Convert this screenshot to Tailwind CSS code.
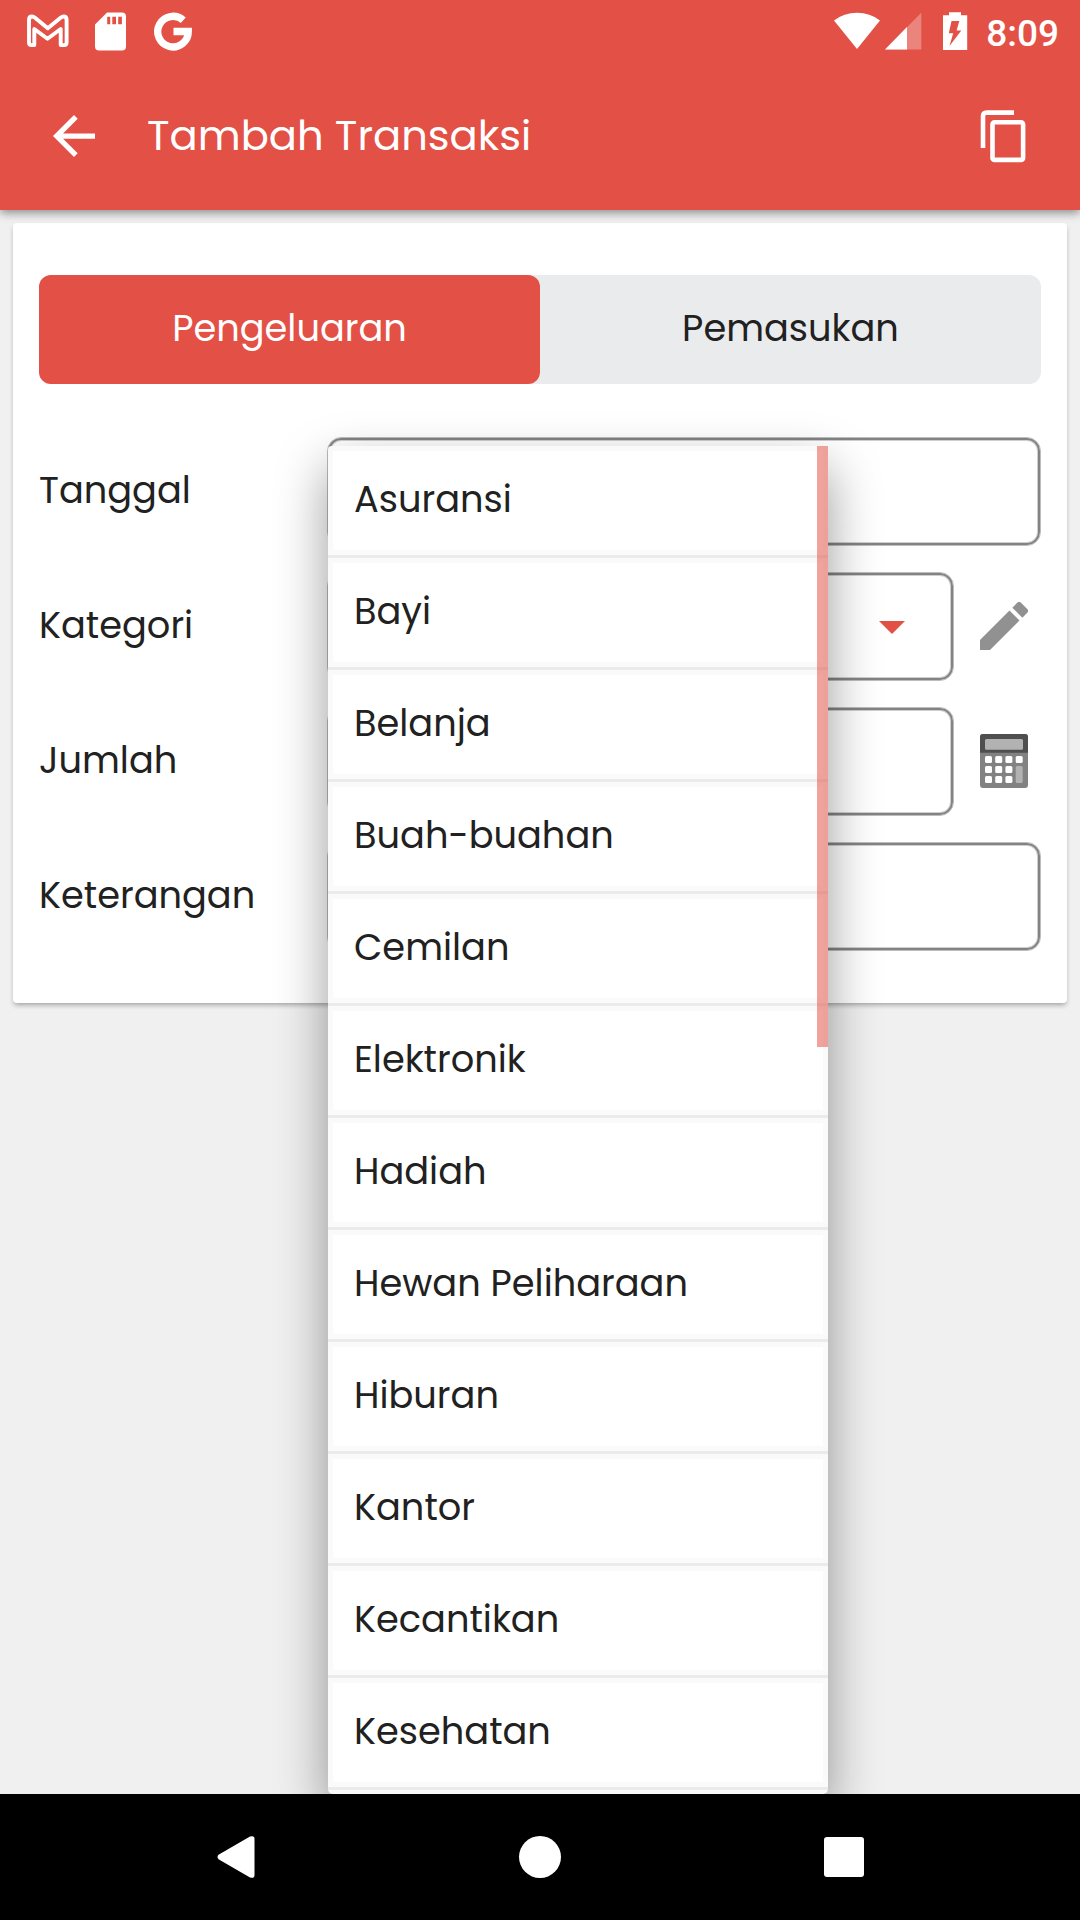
<!DOCTYPE html>
<html lang="id">
<head>
<meta charset="utf-8">
<title>Tambah Transaksi</title>
<script src="https://cdn.jsdelivr.net/npm/@tailwindcss/browser@4"></script>
</head>
<body class="relative flex h-[1920px] w-[1080px] flex-col overflow-hidden bg-[#f0f0f0] font-['Poppins',sans-serif] text-[36.75px] leading-none text-[#212121]">
  <header class="relative h-[210px] shrink-0 bg-[#e35046] text-white shadow-[0_3px_9px_rgba(0,0,0,0.42)]">
    <!-- status bar -->
    <div class="flex h-[63px] items-center justify-between pr-[21px] pl-[26px]">
      <svg class="h-[63px] w-[170px]" viewBox="26 0 170 63" fill="none">
        <path d="M29 20v22.500q0 2.600 2.600 2.600H34.300V29L47.500 38.700 60.700 29v16.100H64q2.600 0 2.600-2.600V20q0-3.500-3-3.500-1.500 0-3 1.200L47.800 28.300 35 17.700q-1.500-1.200-3-1.200-3 0-3 3.500z" stroke="#fff" stroke-width="3.900" stroke-linejoin="round"/>
        <path fill="#fff" fill-rule="evenodd" d="M107 12.500h15a4 4 0 0 1 4 4v30a4 4 0 0 1-4 4H99a4 4 0 0 1-4-4V24.500zM107.200 16.800v7.400h3v-7.400zM112.300 16.800v7.400h3.700v-7.400zM118.200 16.800v7.400h3.700v-7.400z"/>
        <path d="M183.300 20.300A15.300 15.300 0 1 0 188.300 31.500H173.500" stroke="#fff" stroke-width="7.300"/>
      </svg>
      <div class="flex items-center">
        <svg class="mr-[-2px] h-[63px] w-[154px]" viewBox="834 0 154 63" fill="#fff">
          <path d="M834 20.500Q844 12.800 857 12.800T880 20.500L857 49z"/>
          <path d="M921.300 12.800v36.700H885z" opacity=".3"/>
          <path d="M907 27v22.500H885z"/>
          <path fill-rule="evenodd" d="M949 12.300h12v3h6.200V50H943V15.300h6zM951.500 21l-2.700 12.200h4.400L949.500 46l11.800-15.500h-4.700L959.300 21z"/>
        </svg>
        <span class="font-['Roboto',sans-serif] text-[37px] font-medium leading-[63px] pt-[3px]">8:09</span>
      </div>
    </div>
    <!-- app bar -->
    <div class="flex h-[147px] items-center pr-[53px] pb-px pl-[53px]">
      <svg class="h-[42px] w-[42px]" viewBox="4 4 16 16" fill="#fff"><path d="M20 11H7.830l5.590-5.590L12 4l-8 8 8 8 1.410-1.410L7.830 13H20v-2z"/></svg>
      <h1 class="grow pl-[52px] text-[41.7px] leading-[60px]">Tambah Transaksi</h1>
      <svg class="h-[53px] w-[47px]" viewBox="0 0 47 53" fill="none" stroke="#fff" stroke-width="4.600"><path d="M34 2.600H6.500Q3 2.600 3 6V38"/><rect x="12.500" y="12.300" width="30.600" height="37.600" rx="2"/></svg>
    </div>
  </header>

  <main class="mx-[13px] mt-[13px] h-[780px] shrink-0 rounded-[4px] bg-white px-[26px] pt-[52px] shadow-[0_3px_5px_-1px_rgba(0,0,0,0.32)]">
    <div class="flex h-[109px] rounded-[12px] bg-[#eaebed]">
      <div class="flex w-[501px] items-center justify-center rounded-[12px] bg-[#e35046] pb-[3px] text-white">Pengeluaran</div>
      <div class="flex flex-1 items-center justify-center pb-[3px]">Pemasukan</div>
    </div>
    <div class="mt-[53px] flex w-[1002px] flex-col gap-[26px]">
      <div class="flex h-[109px]">
        <div class="flex w-[288px] items-center pb-[3px]">Tanggal</div>
        <div class="flex-1 rounded-[14px] border border-[#bdbdbd] shadow-[inset_0_0_0_2px_#838383,inset_0_0_0_3px_#cfcfcf]"></div>
      </div>
      <div class="flex h-[109px]">
        <div class="flex w-[288px] items-center pb-[3px]">Kategori</div>
        <div class="flex flex-1 items-center justify-end rounded-[14px] border border-[#bdbdbd] pt-[2px] pr-[48px] shadow-[inset_0_0_0_2px_#838383,inset_0_0_0_3px_#cfcfcf]">
          <svg class="h-[13px] w-[26px]" viewBox="0 0 26 13"><path d="M0 0h26L13 13z" fill="#e35046"/></svg>
        </div>
        <div class="flex w-[87px] items-center justify-end pr-[13px] pb-px">
          <svg class="h-[48px] w-[48px]" viewBox="3 3 18 18" fill="#919191"><path d="M3 17.250V21h3.750L17.810 9.940l-3.750-3.750L3 17.250zM20.710 7.040a1 1 0 0 0 0-1.410l-2.340-2.340a1 1 0 0 0-1.410 0l-1.830 1.830 3.750 3.750 1.830-1.830z"/></svg>
        </div>
      </div>
      <div class="flex h-[109px]">
        <div class="flex w-[288px] items-center pb-[3px]">Jumlah</div>
        <div class="flex-1 rounded-[14px] border border-[#bdbdbd] shadow-[inset_0_0_0_2px_#838383,inset_0_0_0_3px_#cfcfcf]"></div>
        <div class="flex w-[87px] items-center justify-end pr-[13px] pb-px">
          <svg class="h-[54px] w-[48px]" viewBox="0 0 48 54">
            <rect width="48" height="54" rx="3" fill="#828282"/>
            <path d="M0 18.700V3a3 3 0 0 1 3-3h42a3 3 0 0 1 3 3v15.700z" fill="#4f4f4f"/>
            <rect x="5" y="5" width="38" height="10.700" rx="1.500" fill="#b2b2b2"/>
            <g fill="#fff">
              <rect x="5" y="22" width="7" height="7" rx="1.500"/><rect x="15.200" y="22" width="7" height="7" rx="1.500"/><rect x="25.400" y="22" width="7" height="7" rx="1.500"/><rect x="35.700" y="22" width="7" height="7" rx="1.500"/>
              <rect x="5" y="32" width="7" height="7" rx="1.500"/><rect x="15.200" y="32" width="7" height="7" rx="1.500"/><rect x="25.400" y="32" width="7" height="7" rx="1.500"/>
              <rect x="5" y="42" width="7" height="7" rx="1.500"/><rect x="15.200" y="42" width="7" height="7" rx="1.500"/><rect x="25.400" y="42" width="7" height="7" rx="1.500"/>
            </g>
            <rect x="35.700" y="32" width="7" height="17" rx="1.500" fill="#b2b2b2"/>
          </svg>
        </div>
      </div>
      <div class="flex h-[109px]">
        <div class="flex w-[288px] items-center pb-[3px]">Keterangan</div>
        <div class="flex-1 rounded-[14px] border border-[#bdbdbd] shadow-[inset_0_0_0_2px_#838383,inset_0_0_0_3px_#cfcfcf]"></div>
      </div>
    </div>
  </main>

  <!-- category dropdown -->
  <div class="absolute top-[446px] left-[328px] h-[1348px] w-[500px] overflow-clip rounded-tl-[4px] rounded-b-[5px] bg-[#fafafa] shadow-[0_22px_52px_rgba(0,0,0,0.4)]">
    <ul class="flex flex-col [&>li]:flex [&>li]:h-[112px] [&>li]:shrink-0 [&>li]:items-center [&>li]:border-b-3 [&>li]:border-[#ebebeb] [&>li]:p-[5px] [&>li>span]:flex [&>li>span]:h-full [&>li>span]:w-full [&>li>span]:items-center [&>li>span]:bg-white [&>li>span]:pb-[3px] [&>li>span]:pl-[21px]">
      <li><span>Asuransi</span></li>
      <li><span>Bayi</span></li>
      <li><span>Belanja</span></li>
      <li><span>Buah-buahan</span></li>
      <li><span>Cemilan</span></li>
      <li><span>Elektronik</span></li>
      <li><span>Hadiah</span></li>
      <li><span>Hewan Peliharaan</span></li>
      <li><span>Hiburan</span></li>
      <li><span>Kantor</span></li>
      <li><span>Kecantikan</span></li>
      <li><span>Kesehatan</span></li>
    </ul>
    <div class="absolute top-0 right-0 h-[601px] w-[11px] bg-[#e35046]/53"></div>
  </div>

  <nav class="relative mt-auto flex h-[126px] shrink-0 items-center justify-between bg-black pr-[216px] pl-[217px]">
    <svg class="h-[42px] w-[38px]" viewBox="0 0 38 42" fill="#fff"><path d="M1.500 18.800 33 .6Q37.500-.9 37.500 3V39Q37.500 42.900 33 41.400L1.500 23.200Q-.5 21 1.500 18.800z"/></svg>
    <div class="h-[42px] w-[42px] rounded-full bg-white"></div>
    <div class="h-[40px] w-[40px] rounded-[3px] bg-white"></div>
  </nav>
</body>
</html>
